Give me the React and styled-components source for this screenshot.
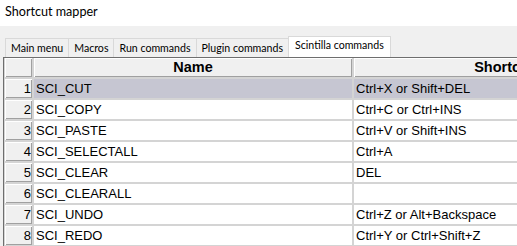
import styled, { createGlobalStyle } from "styled-components";

const GlobalStyle = createGlobalStyle`
    body{
        margin: 0;
        background: #f0f0f0;
        overflow: hidden;
    }
`;

const tabs = ['Main menu', 'Macros', 'Run commands', 'Plugin commands', 'Scintilla commands'];

const commands = [
    { name: 'SCI_CUT', keys: 'Ctrl+X or Shift+DEL' },
    { name: 'SCI_COPY', keys: 'Ctrl+C or Ctrl+INS' },
    { name: 'SCI_PASTE', keys: 'Ctrl+V or Shift+INS' },
    { name: 'SCI_SELECTALL', keys: 'Ctrl+A' },
    { name: 'SCI_CLEAR', keys: 'DEL' },
    { name: 'SCI_CLEARALL', keys: '' },
    { name: 'SCI_UNDO', keys: 'Ctrl+Z or Alt+Backspace' },
    { name: 'SCI_REDO', keys: 'Ctrl+Y or Ctrl+Shift+Z' },
];

function App() {
    const active = 4;   // Scintilla commands tab is the open one
    const selected = 0;
    return (
        <Window>
            <GlobalStyle />
            <TitleBar>Shortcut mapper</TitleBar>
            <Body>
                <TabStrip>
                    {tabs.map((t, i) => (
                        <Tab key={t} $active={i === active}>{t}</Tab>
                    ))}
                </TabStrip>
                <Grid>
                    <HeadCell />
                    <HeadCell>Name</HeadCell>
                    <HeadCell>Shortcut</HeadCell>
                    {commands.map((c, i) => (
                        <Row key={c.name}>
                            <RowNum>{i + 1}</RowNum>
                            <Cell $selected={i === selected}>{c.name}</Cell>
                            <Cell $selected={i === selected}>{c.keys}</Cell>
                        </Row>
                    ))}
                </Grid>
            </Body>
        </Window>
    );
}

const Window = styled.div`
    width: 517px;
    height: 246px;
    overflow: hidden;
    background: #f0f0f0;
    display: flex;
    flex-direction: column;
`;

const TitleBar = styled.div`
    height: 26px;
    flex-shrink: 0;
    background: #fff;
    padding-left: 5px;
    font-family: Lato, "Noto Sans", sans-serif;
    font-size: 12.6px;
    line-height: 24px;
    color: #000;
`;

const Body = styled.div`
    flex: 1;
    padding-left: 3px;
    display: flex;
    flex-direction: column;
`;

const TabStrip = styled.div`
    height: 31px;
    flex-shrink: 0;
    padding-left: 2px;
    display: flex;
    align-items: flex-end;
`;

const Tab = styled.div`
    height: ${p => p.$active ? '21px' : '19px'};
    box-sizing: border-box;
    padding: 0 ${p => p.$active ? '6px' : '5px'};
    margin-left: -1px;
    border: 1px solid #d9d9d9;
    border-bottom: none;
    background: ${p => p.$active ? '#fff' : '#f0f0f0'};
    font-family: Lato, "Noto Sans", sans-serif;
    font-size: 10.6px;
    line-height: ${p => p.$active ? '17px' : '18px'};
    color: #000;
    white-space: nowrap;
    &:first-child{
        margin-left: 0;
    }
`;

const Grid = styled.div`
    flex: 1;
    border-top: 1px solid #6e6e6e;
    border-left: 1px solid #6e6e6e;
    padding-left: 1px;
    background: #d4d4d4;
    display: grid;
    grid-template-columns: 27px 318px 300px;
    grid-auto-rows: 19px;
    gap: 2px;
    align-content: start;
    font-family: "Liberation Sans", Arial, sans-serif;
    font-size: 13px;
    color: #000;
`;

const HeadCell = styled.div`
    background: #f0f0f0;
    box-shadow: inset 1px 1px #fff, inset -1px -1px #a0a0a0;
    font-weight: bold;
    font-size: 14.5px;
    line-height: 19px;
    text-align: center;
`;

const Row = styled.div`
    display: contents;
`;

const RowNum = styled.div`
    background: #f0f0f0;
    box-shadow: inset 1px 1px #fff, inset -1px -1px #a0a0a0;
    text-align: right;
    padding-right: 1px;
    line-height: 19px;
`;

const Cell = styled.div`
    background: ${p => p.$selected ? '#c6c6d2' : '#fff'};
    padding-left: 2px;
    line-height: 19px;
    white-space: nowrap;
    overflow: hidden;
`;

export default App;
